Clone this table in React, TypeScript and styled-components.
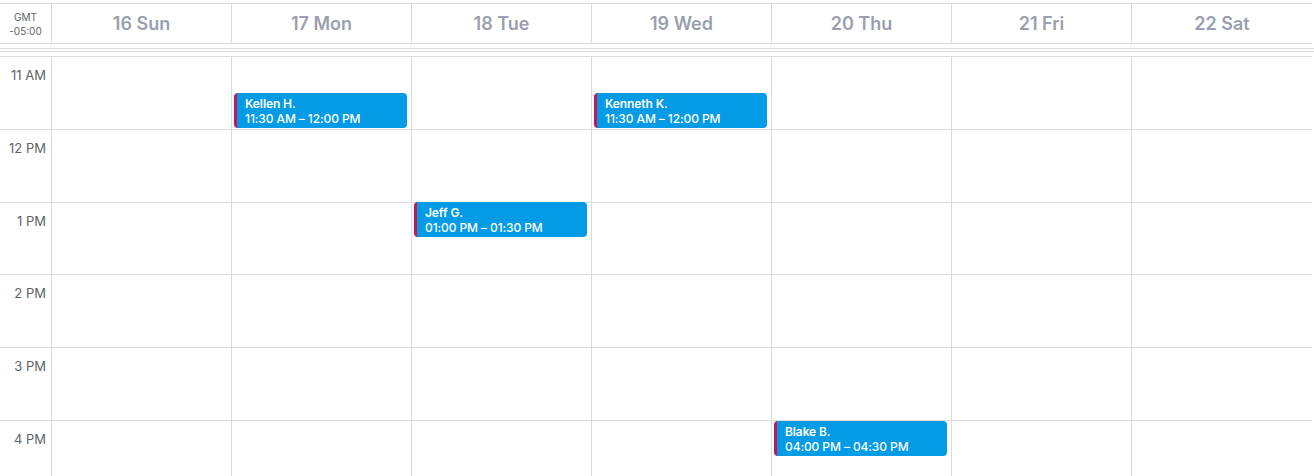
import React from "react";
import styled, { createGlobalStyle } from "styled-components";

const GlobalStyle = createGlobalStyle`
  html, body { margin: 0; padding: 0; background: #ffffff; }
  body { font-family: Inter, "Noto Sans", "Liberation Sans", sans-serif; }
`;

const LINE = "#dcdcdf";
const ROW_H = 72.8;
const FIRST_HOUR = 11;

const Page = styled.div`
  width: 1314px;
  height: 476px;
  overflow: hidden;
  padding-top: 3px;
  box-sizing: border-box;
  background: #fff;
`;

const HeaderRow = styled.div`
  display: grid;
  grid-template-columns: 52px repeat(7, 180px);
  width: 1312px;
  height: 41px;
  box-sizing: border-box;
  border-top: 1px solid ${LINE};
  border-bottom: 1px solid ${LINE};
`;

const GutterHead = styled.div`
  border-right: 1px solid ${LINE};
  display: flex;
  flex-direction: column;
  align-items: center;
  justify-content: center;
  font-size: 10px;
  line-height: 14px;
  color: #5f6368;
`;

const DayHead = styled.div<{ $last?: boolean }>`
  border-right: ${(p) => (p.$last ? "none" : `1px solid ${LINE}`)};
  display: flex;
  align-items: center;
  justify-content: center;
  font-size: 18px;
  font-weight: 600;
  color: #9a9fad;
`;

const Divider = styled.div`
  margin-top: 4px;
  height: 4px;
  box-sizing: border-box;
  border-top: 1px solid ${LINE};
  border-bottom: 1px solid ${LINE};
`;

const Body = styled.div`
  margin-top: 4px;
  display: grid;
  grid-template-columns: 52px repeat(7, 180px);
  width: 1312px;
  border-top: 1px solid ${LINE};
`;

const TimeGutter = styled.div`
  border-right: 1px solid ${LINE};
`;

const TimeSlot = styled.div`
  height: ${ROW_H}px;
  box-sizing: border-box;
  border-bottom: 1px solid ${LINE};
  padding: 10px 5px 0 0;
  text-align: right;
  font-size: 13px;
  line-height: 16px;
  color: #5f6368;
`;

const DayColumn = styled.div<{ $last?: boolean }>`
  position: relative;
  border-right: ${(p) => (p.$last ? "none" : `1px solid ${LINE}`)};
`;

const HourCell = styled.div`
  height: ${ROW_H}px;
  box-sizing: border-box;
  border-bottom: 1px solid ${LINE};
`;

const Event = styled.div`
  position: absolute;
  left: 2px;
  width: 173px;
  height: 35px;
  box-sizing: border-box;
  background: #039be5;
  border-left: 3px solid #c2185b;
  border-radius: 4px;
  padding: 3px 0 0 8px;
  color: #ffffff;
  font-size: 12px;
  line-height: 15px;
  letter-spacing: -0.1px;
  overflow: hidden;
`;

const EventName = styled.div`
  font-weight: 600;
`;

const EventTime = styled.div`
  font-weight: 500;
`;

type Ev = { day: number; name: string; start: number; label: string };

const days = ["16 Sun", "17 Mon", "18 Tue", "19 Wed", "20 Thu", "21 Fri", "22 Sat"];
const hours = ["11 AM", "12 PM", "1 PM", "2 PM", "3 PM", "4 PM"];

const events: Ev[] = [
  { day: 1, name: "Kellen H.", start: 11.5, label: "11:30 AM – 12:00 PM" },
  { day: 3, name: "Kenneth K.", start: 11.5, label: "11:30 AM – 12:00 PM" },
  { day: 2, name: "Jeff G.", start: 13, label: "01:00 PM – 01:30 PM" },
  { day: 4, name: "Blake B.", start: 16, label: "04:00 PM – 04:30 PM" },
];

export default function App() {
  return (
    <Page>
      <GlobalStyle />
      <HeaderRow>
        <GutterHead>
          <span>GMT</span>
          <span>-05:00</span>
        </GutterHead>
        {days.map((d, i) => (
          <DayHead key={d} $last={i === days.length - 1}>
            {d}
          </DayHead>
        ))}
      </HeaderRow>
      <Divider />
      <Body>
        <TimeGutter>
          {hours.map((h) => (
            <TimeSlot key={h}>{h}</TimeSlot>
          ))}
        </TimeGutter>
        {days.map((d, i) => (
          <DayColumn key={d} $last={i === days.length - 1}>
            {hours.map((h) => (
              <HourCell key={h} />
            ))}
            {events
              .filter((e) => e.day === i)
              .map((e) => (
                <Event key={e.name} style={{ top: (e.start - FIRST_HOUR) * ROW_H - 0.4 }}>
                  <EventName>{e.name}</EventName>
                  <EventTime>{e.label}</EventTime>
                </Event>
              ))}
          </DayColumn>
        ))}
      </Body>
    </Page>
  );
}
